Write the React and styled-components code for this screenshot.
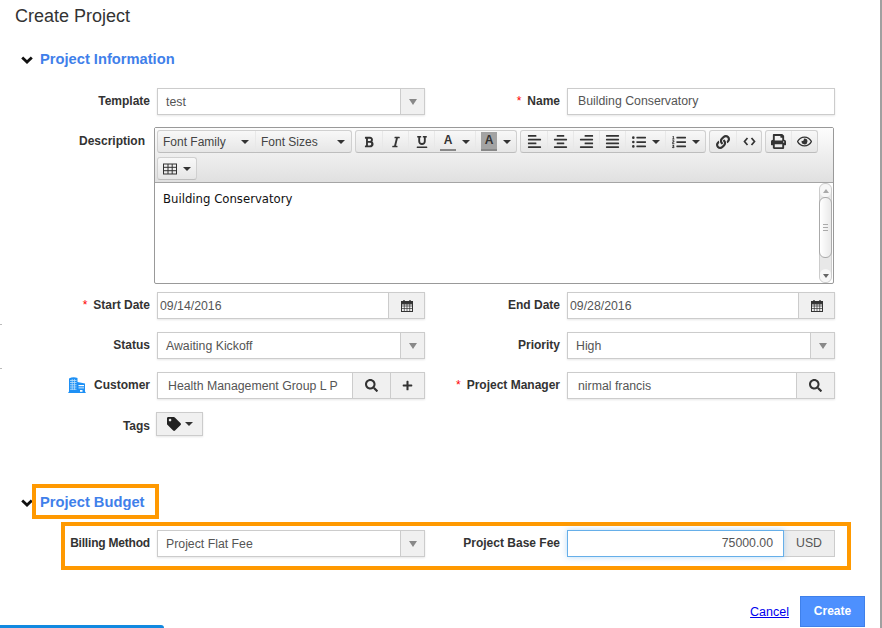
import React from 'react'
import styled, { createGlobalStyle } from 'styled-components'
import {
  FaSearch, FaPlus, FaTag, FaBold, FaItalic, FaUnderline,
  FaAlignLeft, FaAlignCenter, FaAlignRight, FaAlignJustify, FaListUl, FaListOl, FaLink,
  FaPrint, FaRegEye,
} from 'react-icons/fa'

const GlobalStyle = createGlobalStyle`
  html, body {
    margin: 0;
    padding: 0;
    background: #fff;
    overflow: hidden;
    font-family: "Liberation Sans", Arial, sans-serif;
  }
`

const Modal = styled.div`
  position: relative;
  box-sizing: border-box;
  width: 882px;
  height: 628px;
  border-right: 2px solid #a0a0a0;
  overflow: hidden;
`
const Title = styled.h1`
  margin: 0;
  padding: 5px 0 0 15px;
  height: 23px;
  font-size: 18px;
  line-height: 22px;
  font-weight: 400;
  color: #333;
`
const SectionHead = styled.div`
  display: flex;
  align-items: center;
  height: ${p => p.$h || 20}px;
  margin-top: ${p => p.$top}px;
  padding-left: 21px;
  svg { flex: none; margin-top: 2px; }
`
const SectionTitle = styled.span`
  margin-left: 7px;
  font-size: 14.7px;
  font-weight: 700;
  color: #3f80ea;
`
const BudgetTitle = styled(SectionTitle)`
  box-sizing: border-box;
  margin-left: -1px;
  width: 127px;
  height: 35px;
  padding: 0 4px;
  border: 4px solid #ff9900;
  line-height: 28px;
`
const Row = styled.div`
  display: grid;
  grid-template-columns: ${p => p.$first || 150}px 268px 128px 268px;
  column-gap: 7px;
  align-items: center;
  margin-top: ${p => p.$top || 0}px;
`
const FormRows = styled.div`
  padding-top: ${p => p.$top}px;
`
const Label = styled.label`
  font-size: 12px;
  font-weight: 700;
  color: #333;
  text-align: right;
  white-space: nowrap;
  margin-top: -2px;
`
const DescriptionLabel = styled(Label)`
  align-self: start;
  padding: 9px 5px 0 0;
`
const TagsLabel = styled(Label)`
  margin-top: 3px;
`
const BillingLabel = styled(Label)`
  letter-spacing: -0.2px;
`
const Req = styled.span`
  color: #f00;
  font-weight: 400;
  margin-right: 6px;
`
const Control = styled.div`
  display: flex;
  box-sizing: border-box;
  height: 27px;
  border: 1px solid #ccc;
  background: #fff;
  box-shadow: 0 1px 2px rgba(0, 0, 0, 0.1);
`
const Value = styled.div`
  flex: 1;
  min-width: 0;
  padding-left: ${p => p.$pad || 8}px;
  padding-right: ${p => p.$padRight || 0}px;
  font-size: 12.3px;
  line-height: ${p => p.$line || 25}px;
  color: #555;
  white-space: nowrap;
  text-align: ${p => p.$align || 'left'};
`
const Addon = styled.div`
  display: flex;
  align-items: center;
  justify-content: center;
  box-sizing: border-box;
  flex: none;
  width: ${p => p.$w}px;
  background: #f0f0f0;
  border-left: 1px solid #ccc;
  color: #333;
  svg { width: ${p => p.$icon || 13}px; height: ${p => p.$icon || 13}px; }
`
const Arrow = styled.i`
  width: 0;
  height: 0;
  border-left: 4px solid transparent;
  border-right: 4px solid transparent;
  border-top: 6px solid #888;
`
const Caret = styled.i`
  display: block;
  flex: none;
  width: 0;
  height: 0;
  border-left: 4px solid transparent;
  border-right: 4px solid transparent;
  border-top: 4px solid #333;
`
const Select = ({ value }) => (
  <Control>
    <Value $line={27}>{value}</Value>
    <Addon $w={24}><Arrow /></Addon>
  </Control>
)

const Editor = styled.div`
  grid-column: 2 / 5;
  box-sizing: border-box;
  margin-left: -3px;
  width: 680px;
  height: 157px;
  border: 1px solid #999;
  border-radius: 2px;
  display: flex;
  flex-direction: column;
`
const Toolbar = styled.div`
  flex: none;
  height: 52px;
  padding: 2px 2px 0;
  background: linear-gradient(#fdfdfd, #e0e0e0);
  border-bottom: 1px solid #a5a5a5;
`
const ToolRow = styled.div`
  display: flex;
  gap: 3px;
  height: 23px;
  margin-bottom: 4px;
`
const ToolGroup = styled.div`
  display: flex;
  height: 23px;
  box-sizing: border-box;
  border: 1px solid #d0d0d0;
  border-bottom-color: #bdbdbd;
  border-radius: 3px;
  background: linear-gradient(#f8f8f8, #e6e6e6);
`
const Tool = styled.div`
  display: flex;
  align-items: center;
  justify-content: ${p => (p.$text ? 'space-between' : 'center')};
  gap: 6px;
  box-sizing: border-box;
  width: ${p => p.$w || 26}px;
  padding: ${p => (p.$text ? '0 6px 0 5px' : '0')};
  font-size: 12px;
  color: #444;
  & + & { border-left: 1px solid #e8e8e8; }
  svg { width: ${p => p.$icon || 13}px; height: ${p => p.$icon || 13}px; color: #333; flex: none; }
`
const LetterA = styled.span`
  box-sizing: border-box;
  width: 16px;
  height: 19px;
  line-height: 16px;
  text-align: center;
  font-size: 12px;
  font-weight: 700;
  color: #333;
  border-bottom: 2px solid #888;
  background: ${p => (p.$fill ? '#a3a3a3' : 'transparent')};
`
const EditorBody = styled.div`
  flex: 1;
  display: flex;
  min-height: 0;
`
const EditorText = styled.div`
  flex: 1;
  padding: 9px 8px;
  font-family: "DejaVu Sans", Verdana, sans-serif;
  font-size: 11.7px;
  line-height: 15px;
  color: #111;
`
const Scrollbar = styled.div`
  flex: none;
  display: flex;
  flex-direction: column;
  align-items: center;
  box-sizing: border-box;
  width: 13px;
  margin-right: 1px;
  border: 1px solid #ccc;
  border-radius: 6px;
  background: #e8e8e8;
`
const ScrollEnd = styled.div`
  flex: none;
  height: ${p => p.$h}px;
  width: 100%;
  background: #f7f7f7;
  display: flex;
  align-items: center;
  justify-content: center;
  border-radius: 6px;
  i {
    width: 0;
    height: 0;
    border-left: 3px solid transparent;
    border-right: 3px solid transparent;
    ${p => (p.$up ? 'border-bottom: 4px solid #aaa;' : 'border-top: 4px solid #666;')}
  }
`
const ScrollThumb = styled.div`
  flex: none;
  box-sizing: border-box;
  width: 13px;
  height: 61px;
  border: 1px solid #aaa;
  border-radius: 6px;
  background: linear-gradient(90deg, #fff, #e9e9e9);
  display: flex;
  align-items: center;
  justify-content: center;
  &::after {
    content: '';
    width: 5px;
    height: 7px;
    background: repeating-linear-gradient(#aaa 0 1px, transparent 1px 3px);
  }
`
const ScrollTrack = styled.div`
  flex: 1;
`
const TagButton = styled.button`
  display: flex;
  align-items: center;
  justify-content: center;
  gap: 4px;
  box-sizing: border-box;
  margin-left: -1px;
  width: 47px;
  height: 24px;
  padding: 0;
  border: 1px solid #ccc;
  background: #f0f0f0;
  box-shadow: 0 1px 2px rgba(0, 0, 0, 0.1);
  color: #222;
  svg { width: 14px; height: 14px; }
`
const CustomerLabel = styled(Label)`
  display: flex;
  justify-content: flex-end;
  align-items: center;
  gap: 8px;
`
const BudgetBox = styled.div`
  box-sizing: border-box;
  width: 790px;
  height: 48px;
  margin: 3px 0 0 61px;
  padding-top: 4px;
  border: 4px solid #ff9900;
`
const FeeGroup = styled.div`
  display: flex;
  height: 27px;
`
const FeeInput = styled(Control)`
  flex: none;
  width: 217px;
  border-color: #66afe9;
  box-shadow: 0 0 6px rgba(102, 175, 233, 0.45);
  position: relative;
`
const FeeUnit = styled.div`
  flex: 1;
  box-sizing: border-box;
  border: 1px solid #ccc;
  border-left: none;
  background: #eee;
  color: #555;
  font-size: 12.3px;
  line-height: 25px;
  text-align: center;
`
const Footer = styled.div`
  display: flex;
  justify-content: flex-end;
  align-items: center;
  gap: 11px;
  margin: 26px 15px 0 0;
`
const CancelLink = styled.a`
  color: #0000ee;
  font-size: 12.5px;
  text-decoration: underline;
`
const CreateButton = styled.button`
  box-sizing: border-box;
  width: 65px;
  height: 31px;
  padding: 0 0 2px;
  border: 1px solid #3f80ea;
  background: #4d90fe;
  color: #fff;
  font-family: inherit;
  font-size: 12px;
  font-weight: 700;
`
const BackBar = styled.div`
  position: absolute;
  left: 0;
  bottom: 0;
  width: 164px;
  height: 3px;
  background: #1289e0;
  border-radius: 0 3px 0 0;
`
const BackTick = styled.div`
  position: absolute;
  left: 0;
  top: ${p => p.$y}px;
  width: 2px;
  height: 1px;
  background: #bbb;
`

const Chevron = () => (
  <svg width="12" height="8" viewBox="0 0 12 8" fill="none" stroke="#111" strokeWidth="2.8">
    <path d="M1.2 1.4 L6 6 L10.8 1.4" />
  </svg>
)
const BuildingIcon = () => (
  <svg width="18" height="16" viewBox="0 0 18 16" fill="#1e90f5">
    <path d="M0 16 L1 14.5 V1.5 Q5 -0.5 9.5 1 V5 L17 6.5 V14.5 L18 16 Z" />
    <g fill="#bfe2fb">
      <rect x="2" y="3" width="6.5" height="0.8" /><rect x="2" y="5.2" width="6.5" height="0.8" />
      <rect x="2" y="7.4" width="6.5" height="0.8" /><rect x="2" y="9.6" width="6.5" height="0.8" />
      <rect x="2" y="11.8" width="6.5" height="0.8" />
      <rect x="3.8" y="2" width="0.7" height="11" /><rect x="6" y="2" width="0.7" height="11" />
    </g>
    <g fill="#fff">
      <rect x="10.5" y="8" width="5.5" height="1.2" /><rect x="10.5" y="10.5" width="5.5" height="0.8" />
      <rect x="12" y="13" width="2.5" height="1.8" />
    </g>
  </svg>
)
const CalendarIcon = () => (
  <svg viewBox="0 0 12 12" fill="none" stroke="#333">
    <rect x="0.5" y="1.5" width="11" height="10" />
    <rect x="0.5" y="1.5" width="11" height="2.4" fill="#333" />
    <path d="M3 0 V2 M9 0 V2" strokeWidth="1.4" />
    <path d="M0.5 6 H11.5 M0.5 8.5 H11.5 M3.3 4 V11.5 M6 4 V11.5 M8.7 4 V11.5" strokeWidth="0.7" />
  </svg>
)
const CodeIcon = () => (
  <svg viewBox="0 0 13 13" fill="none" stroke="#333" strokeWidth="1.7">
    <path d="M4.5 3 L1.5 6.5 L4.5 10 M8.5 3 L11.5 6.5 L8.5 10" />
  </svg>
)
const TableIcon = () => (
  <svg viewBox="0 0 14 11" fill="none" stroke="#333" strokeWidth="1">
    <rect x="0.5" y="0.5" width="13" height="10" />
    <path d="M0.5 3.8 H13.5 M0.5 7.2 H13.5 M5 0.5 V10.5 M9.2 0.5 V10.5" />
  </svg>
)

const DateField = ({ value }) => (
  <Control>
    <Value $pad={2} $line={27}>{value}</Value>
    <Addon $w={36} $icon={12}><CalendarIcon /></Addon>
  </Control>
)

export default function App() {
  return (
    <Modal>
      <GlobalStyle />
      <Title>Create Project</Title>

      <SectionHead $top={21}>
        <Chevron />
        <SectionTitle>Project Information</SectionTitle>
      </SectionHead>

      <FormRows $top={19}>
        <Row>
          <Label>Template</Label>
          <Select value="test" />
          <Label><Req>*</Req>Name</Label>
          <Control><Value $pad={10}>Building Conservatory</Value></Control>
        </Row>

        <Row $top={12}>
          <DescriptionLabel>Description</DescriptionLabel>
          <Editor>
            <Toolbar>
              <ToolRow>
                <ToolGroup>
                  <Tool $text $w={97}>Font Family<Caret /></Tool>
                  <Tool $text $w={96}>Font Sizes<Caret /></Tool>
                </ToolGroup>
                <ToolGroup>
                  <Tool $icon={12}><FaBold /></Tool>
                  <Tool $icon={12}><FaItalic /></Tool>
                  <Tool $icon={12}><FaUnderline /></Tool>
                  <Tool $w={41}><LetterA>A</LetterA><Caret /></Tool>
                  <Tool $w={41}><LetterA $fill>A</LetterA><Caret /></Tool>
                </ToolGroup>
                <ToolGroup>
                  <Tool $icon={15}><FaAlignLeft /></Tool>
                  <Tool $icon={15}><FaAlignCenter /></Tool>
                  <Tool $icon={15}><FaAlignRight /></Tool>
                  <Tool $icon={15}><FaAlignJustify /></Tool>
                  <Tool $w={40} $icon={14}><FaListUl /><Caret /></Tool>
                  <Tool $w={40} $icon={14}><FaListOl /><Caret /></Tool>
                </ToolGroup>
                <ToolGroup>
                  <Tool $icon={14}><FaLink /></Tool>
                  <Tool $w={25}><CodeIcon /></Tool>
                </ToolGroup>
                <ToolGroup>
                  <Tool $w={25} $icon={15}><FaPrint /></Tool>
                  <Tool $icon={15}><FaRegEye /></Tool>
                </ToolGroup>
              </ToolRow>
              <ToolRow>
                <ToolGroup>
                  <Tool $w={38} $icon={14}><TableIcon /><Caret /></Tool>
                </ToolGroup>
              </ToolRow>
            </Toolbar>
            <EditorBody>
              <EditorText>Building Conservatory</EditorText>
              <Scrollbar>
                <ScrollEnd $up $h={13}><i /></ScrollEnd>
                <ScrollThumb />
                <ScrollTrack />
                <ScrollEnd $h={13}><i /></ScrollEnd>
              </Scrollbar>
            </EditorBody>
          </Editor>
        </Row>

        <Row $top={8}>
          <Label><Req>*</Req>Start Date</Label>
          <DateField value="09/14/2016" />
          <Label>End Date</Label>
          <DateField value="09/28/2016" />
        </Row>

        <Row $top={13}>
          <Label>Status</Label>
          <Select value="Awaiting Kickoff" />
          <Label>Priority</Label>
          <Select value="High" />
        </Row>

        <Row $top={13}>
          <CustomerLabel><BuildingIcon />Customer</CustomerLabel>
          <Control>
            <Value $pad={10} $line={27}>Health Management Group L P</Value>
            <Addon $w={38}><FaSearch /></Addon>
            <Addon $w={34} $icon={11}><FaPlus /></Addon>
          </Control>
          <Label><Req>*</Req>Project Manager</Label>
          <Control>
            <Value $pad={10} $line={27}>nirmal francis</Value>
            <Addon $w={38}><FaSearch /></Addon>
          </Control>
        </Row>

        <Row $top={13}>
          <TagsLabel>Tags</TagsLabel>
          <TagButton><FaTag /><Caret /></TagButton>
        </Row>
      </FormRows>

      <SectionHead $top={48} $h={35}>
        <Chevron />
        <BudgetTitle>Project Budget</BudgetTitle>
      </SectionHead>

      <BudgetBox>
        <Row $first={85}>
          <BillingLabel>Billing Method</BillingLabel>
          <Select value="Project Flat Fee" />
          <Label>Project Base Fee</Label>
          <FeeGroup>
            <FeeInput>
              <Value $align="right" $padRight={10}>75000.00</Value>
            </FeeInput>
            <FeeUnit>USD</FeeUnit>
          </FeeGroup>
        </Row>
      </BudgetBox>

      <Footer>
        <CancelLink href="#">Cancel</CancelLink>
        <CreateButton>Create</CreateButton>
      </Footer>

      <BackBar />
      <BackTick $y={324} />
      <BackTick $y={368} />
    </Modal>
  )
}
